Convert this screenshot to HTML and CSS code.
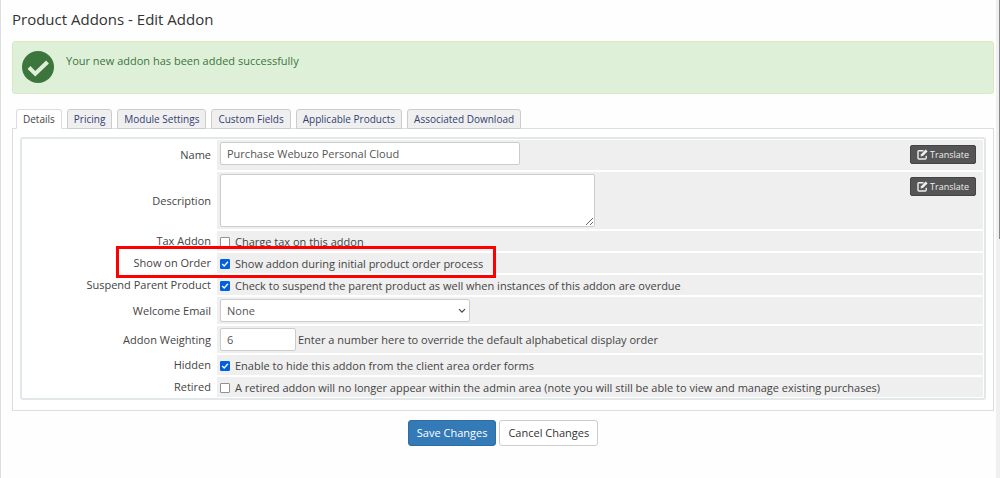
FILE: index.html
```html
<!DOCTYPE html>
<html lang="en">
<head>
<meta charset="utf-8">
<title>Product Addons - Edit Addon</title>
<link rel="stylesheet" href="styles.css">
</head>
<body>
<main class="page">
  <h1 class="title">Product Addons - Edit Addon</h1>
  <div class="alert" role="status">
    <svg class="alert-icon" viewBox="0 0 32 32" aria-hidden="true"><circle cx="16" cy="16" r="16" fill="#3c763d"/><path d="M7 16.5l6.3 6.3L25.5 11" fill="none" stroke="#dff0d8" stroke-width="4"/></svg>
    <p class="alert-text">Your new addon has been added successfully</p>
  </div>
  <nav class="tabs">
    <a class="tab tab-active" href="#details">Details</a>
    <a class="tab" href="#pricing">Pricing</a>
    <a class="tab" href="#module">Module Settings</a>
    <a class="tab" href="#fields">Custom Fields</a>
    <a class="tab" href="#products">Applicable Products</a>
    <a class="tab" href="#download">Associated Download</a>
  </nav>
  <form>
    <div class="panel">
      <div class="form">
        <div class="row row-name">
          <label class="label" for="name">Name</label>
          <div class="field">
            <input class="control control-name" id="name" type="text" value="Purchase Webuzo Personal Cloud">
            <button class="translate" type="button"><svg class="edit-icon" viewBox="0 0 11 11" aria-hidden="true"><path d="M6.5 1.8H2a1 1 0 0 0-1 1V9a1 1 0 0 0 1 1h6.2a1 1 0 0 0 1-1V6.7" fill="none" stroke="currentColor" stroke-width="1.4"/><path d="M4 5.2L8.7.5l1.9 1.9-4.7 4.7L3.6 7.5z" fill="currentColor"/></svg>Translate</button>
          </div>
        </div>
        <div class="row row-description">
          <label class="label" for="description">Description</label>
          <div class="field">
            <textarea class="control control-description" id="description"></textarea>
            <button class="translate" type="button"><svg class="edit-icon" viewBox="0 0 11 11" aria-hidden="true"><path d="M6.5 1.8H2a1 1 0 0 0-1 1V9a1 1 0 0 0 1 1h6.2a1 1 0 0 0 1-1V6.7" fill="none" stroke="currentColor" stroke-width="1.4"/><path d="M4 5.2L8.7.5l1.9 1.9-4.7 4.7L3.6 7.5z" fill="currentColor"/></svg>Translate</button>
          </div>
        </div>
        <div class="row">
          <span class="label">Tax Addon</span>
          <div class="field"><label class="option"><input class="check" type="checkbox">Charge tax on this addon</label></div>
        </div>
        <div class="row row-highlight">
          <span class="label">Show on Order</span>
          <div class="field"><label class="option"><input class="check" type="checkbox" checked>Show addon during initial product order process</label></div>
        </div>
        <div class="row">
          <span class="label">Suspend Parent Product</span>
          <div class="field"><label class="option"><input class="check" type="checkbox" checked>Check to suspend the parent product as well when instances of this addon are overdue</label></div>
        </div>
        <div class="row row-control">
          <label class="label" for="email">Welcome Email</label>
          <div class="field">
            <span class="select-wrap"><select class="control control-email" id="email"><option>None</option></select><svg class="chevron" viewBox="0 0 8 6" aria-hidden="true"><path d="M1 1.2l3 3 3-3" fill="none" stroke="#444" stroke-width="1.2"/></svg></span>
          </div>
        </div>
        <div class="row row-control">
          <label class="label" for="weight">Addon Weighting</label>
          <div class="field"><input class="control control-weight" id="weight" type="text" value="6"><label class="hint" for="weight">Enter a number here to override the default alphabetical display order</label></div>
        </div>
        <div class="row">
          <span class="label">Hidden</span>
          <div class="field"><label class="option"><input class="check" type="checkbox" checked>Enable to hide this addon from the client area order forms</label></div>
        </div>
        <div class="row">
          <span class="label">Retired</span>
          <div class="field"><label class="option"><input class="check" type="checkbox">A retired addon will no longer appear within the admin area (note you will still be able to view and manage existing purchases)</label></div>
        </div>
      </div>
    </div>
    <div class="actions">
      <button class="button button-primary" type="submit">Save Changes</button>
      <button class="button" type="reset">Cancel Changes</button>
    </div>
  </form>
</main>
<div class="scrollbar" aria-hidden="true"><div class="thumb"></div></div>
</body>
</html>
```

FILE: styles.css
```css
* { box-sizing: border-box; }
body {
  margin: 0;
  min-height: 100vh;
  display: flex;
  overflow: hidden;
  background: #fefefe;
  color: #444;
  font: 11px/16px "Open Sans", sans-serif;
}
.page {
  flex: 1;
  min-width: 0;
  padding: 8px 2px 0 11px;
  border-left: 1px solid #ddd;
}
.title { margin: 0 0 11px; font-size: 15px; font-weight: 400; line-height: 22px; color: #333; }
.alert {
  display: flex;
  gap: 12px;
  padding: 9px;
  min-height: 53px;
  background: #dff0d8;
  border: 1px solid #d6e9c6;
  border-radius: 3px;
  color: #3c763d;
}
.alert-icon { width: 32px; height: 32px; }
.alert-text { margin: 2px 0 0; }
.tabs {
  display: flex;
  gap: 5px;
  margin: 15px 0 -1px;
  padding-left: 4px;
  position: relative;
  font-size: 10px;
}
.tab {
  height: 20px;
  padding: 0 6px;
  border: 1px solid #ccc;
  border-radius: 3px 3px 0 0;
  background: #efefef;
  color: #334073;
  line-height: 19px;
  text-decoration: none;
}
.tab-active { background: #fff; color: #444; border-color: #ddd #ddd #fff; }
.panel { padding: 8px 7px 10px; border: 1px solid #ddd; background: #fff; }
.form {
  display: flex;
  flex-direction: column;
  gap: 2px;
  padding: 1px;
  border: 2px solid #e2e7e9;
  border-radius: 3px;
}
.row { display: grid; grid-template-columns: 20% 1fr; column-gap: 2px; min-height: 20px; position: relative; }
.row-name { min-height: 30px; }
.row-description { min-height: 56px; }
.row-control { min-height: 27px; }
.row-highlight { z-index: 1; }
.row-highlight::after {
  content: "";
  position: absolute;
  box-sizing: border-box;
  inset: -7px auto -5px 93px;
  width: 380px;
  border: 3px solid #f00;
  pointer-events: none;
}
.label { align-self: center; padding-right: 4px; text-align: right; }
.field { display: flex; align-items: center; padding: 0 3px; background: #efefef; }
.row-name .field, .row-description .field { align-items: flex-start; padding: 2px 7px 2px 3px; }
.control {
  padding: 0 6px;
  height: 23px;
  border: 1px solid #ccc;
  border-radius: 2px;
  background: #fff;
  color: #555;
  font: inherit;
}
.control-name { width: 300px; }
.control-description { width: 375px; height: 53px; resize: both; }
.select-wrap { position: relative; display: flex; }
.control-email { width: 250px; appearance: none; }
.chevron { position: absolute; right: 4px; top: 9px; width: 8px; height: 6px; pointer-events: none; }
.control-weight { width: 76px; }
.hint { padding-left: 2px; }
.option { display: flex; align-items: center; gap: 5px; padding-top: 2px; }
.check {
  appearance: none;
  width: 10px;
  height: 10px;
  margin: 0;
  border: 1px solid #8f8f9d;
  border-radius: 1px;
  background: #fff;
}
.check:checked {
  border-color: #0060df;
  background: #0060df url("data:image/svg+xml,%3Csvg xmlns='http://www.w3.org/2000/svg' viewBox='0 0 8 8'%3E%3Cpath d='M1.2 4l2 2L7 1.8' fill='none' stroke='white' stroke-width='1.3'/%3E%3C/svg%3E") center / contain;
}
.translate {
  display: flex;
  align-items: center;
  gap: 2px;
  height: 19px;
  margin: 3px 0 0 auto;
  padding: 0 6px;
  border: 1px solid #444;
  border-radius: 2px;
  background: #555;
  color: #eee;
  font: 9px/16px "Open Sans", sans-serif;
}
.edit-icon { width: 11px; height: 11px; }
.actions { display: flex; justify-content: center; gap: 3px; padding-top: 9px; }
.button {
  height: 26px;
  padding: 0 8px;
  border: 1px solid #ccc;
  border-radius: 3px;
  background: #fff;
  color: #333;
  font: inherit;
}
.button-primary { background: #337ab7; border-color: #2e6da4; color: #fff; }
.scrollbar { display: flex; justify-content: flex-end; width: 4px; background: #f0f0f0; }
.thumb { width: 1px; height: 50vh; background: #888; }
```
